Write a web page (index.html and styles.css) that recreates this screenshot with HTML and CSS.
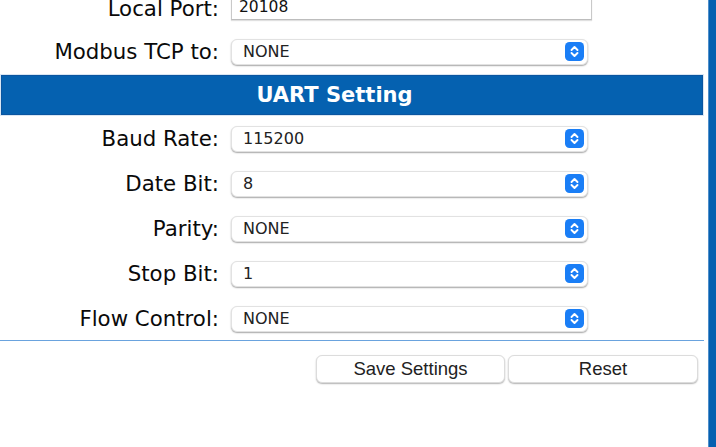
FILE: index.html
```html
<!DOCTYPE html>
<html>
<head>
<meta charset="utf-8">
<link rel="stylesheet" href="styles.css">
</head>
<body>
<div class="page">
  <div class="content">
    <div class="row first">
      <div class="label">Local Port:</div>
      <div class="input">20108</div>
    </div>
    <div class="row">
      <div class="label">Modbus TCP to:</div>
      <div class="select"><span>NONE</span><svg class="ico" viewBox="0 0 19 19"><rect width="19" height="19" rx="4.5" fill="#1a7ef6"/><path d="M6.5 8 L9.5 5 L12.5 8 M6.5 11 L9.5 14 L12.5 11" stroke="#fff" stroke-width="1.9" fill="none" stroke-linecap="round" stroke-linejoin="round"/></svg></div>
    </div>
    <div class="banner"><span>UART Setting</span></div>
    <div class="row">
      <div class="label">Baud Rate:</div>
      <div class="select"><span>115200</span><svg class="ico" viewBox="0 0 19 19"><rect width="19" height="19" rx="4.5" fill="#1a7ef6"/><path d="M6.5 8 L9.5 5 L12.5 8 M6.5 11 L9.5 14 L12.5 11" stroke="#fff" stroke-width="1.9" fill="none" stroke-linecap="round" stroke-linejoin="round"/></svg></div>
    </div>
    <div class="row">
      <div class="label">Date Bit:</div>
      <div class="select"><span>8</span><svg class="ico" viewBox="0 0 19 19"><rect width="19" height="19" rx="4.5" fill="#1a7ef6"/><path d="M6.5 8 L9.5 5 L12.5 8 M6.5 11 L9.5 14 L12.5 11" stroke="#fff" stroke-width="1.9" fill="none" stroke-linecap="round" stroke-linejoin="round"/></svg></div>
    </div>
    <div class="row">
      <div class="label">Parity:</div>
      <div class="select"><span>NONE</span><svg class="ico" viewBox="0 0 19 19"><rect width="19" height="19" rx="4.5" fill="#1a7ef6"/><path d="M6.5 8 L9.5 5 L12.5 8 M6.5 11 L9.5 14 L12.5 11" stroke="#fff" stroke-width="1.9" fill="none" stroke-linecap="round" stroke-linejoin="round"/></svg></div>
    </div>
    <div class="row">
      <div class="label">Stop Bit:</div>
      <div class="select"><span>1</span><svg class="ico" viewBox="0 0 19 19"><rect width="19" height="19" rx="4.5" fill="#1a7ef6"/><path d="M6.5 8 L9.5 5 L12.5 8 M6.5 11 L9.5 14 L12.5 11" stroke="#fff" stroke-width="1.9" fill="none" stroke-linecap="round" stroke-linejoin="round"/></svg></div>
    </div>
    <div class="row">
      <div class="label">Flow Control:</div>
      <div class="select"><span>NONE</span><svg class="ico" viewBox="0 0 19 19"><rect width="19" height="19" rx="4.5" fill="#1a7ef6"/><path d="M6.5 8 L9.5 5 L12.5 8 M6.5 11 L9.5 14 L12.5 11" stroke="#fff" stroke-width="1.9" fill="none" stroke-linecap="round" stroke-linejoin="round"/></svg></div>
    </div>
    <div class="rule"></div>
    <div class="actions">
      <div class="btn save">Save Settings</div>
      <div class="btn reset">Reset</div>
    </div>
  </div>
  <div class="sidebar"></div>
</div>
</body>
</html>
```
FILE: styles.css
```css
html, body {
  margin: 0;
  padding: 0;
  background: #fff;
  overflow: hidden;
}
.page {
  display: flex;
  width: 716px;
  height: 447px;
  gap: 4px;
}
.content {
  width: 705px;
  display: flex;
  flex-direction: column;
  margin-top: -16px;
}
.sidebar {
  width: 7px;
  background: #0560b0;
  border-left: 1px solid #4f8fcb;
}
.row {
  height: 45px;
  display: grid;
  grid-template-columns: 219px 357px;
  column-gap: 12px;
  align-items: center;
}
.row.first {
  align-items: end;
}
.row.first .label {
  margin-bottom: 8px;
}
.row.first .input {
  margin-bottom: 9px;
}
.label {
  font-family: "DejaVu Sans", Verdana, sans-serif;
  font-size: 21.3px;
  line-height: 25px;
  color: #0a0a0a;
  text-align: right;
}
.input {
  box-sizing: border-box;
  width: 361px;
  height: 27px;
  border: 1px solid #c9c9c9;
  border-bottom-color: #bdbdbd;
  box-shadow: 0 1px 1px rgba(0,0,0,0.12);
  font-family: "DejaVu Sans", Verdana, sans-serif;
  font-size: 15.5px;
  color: #111;
  display: flex;
  align-items: center;
  padding-left: 7px;
}
.select {
  box-sizing: border-box;
  height: 26px;
  border: 1px solid #e2e2e2;
  border-radius: 6px;
  box-shadow: 0 1px 1.5px rgba(0,0,0,0.35);
  display: flex;
  align-items: center;
  justify-content: space-between;
  padding: 0 3px 0 11px;
  font-family: "DejaVu Sans", Verdana, sans-serif;
  font-size: 16px;
  color: #222;
  background: #fff;
}
.ico {
  width: 19px;
  height: 19px;
  display: block;
}
.banner {
  box-sizing: border-box;
  height: 42px;
  background: #0561b0;
  border: 1px solid #d9e6f3;
  box-shadow: inset 0 0 0 1px #0a55a0;
  display: flex;
  align-items: center;
  justify-content: center;
  padding-right: 35px;
}
.banner span {
  font-family: "DejaVu Sans", Verdana, sans-serif;
  font-weight: bold;
  font-size: 21px;
  color: #fff;
}
.rule {
  height: 1px;
  margin-top: -1px;
  background: #6aa3de;
}
.actions {
  display: flex;
  justify-content: flex-end;
  gap: 3px;
  padding-right: 6px;
  margin-top: 14px;
}
.btn {
  box-sizing: border-box;
  height: 28px;
  border: 1px solid #dcdcdc;
  border-radius: 6px;
  box-shadow: 0 1px 1.5px rgba(0,0,0,0.3);
  font-family: "Liberation Sans", Arial, sans-serif;
  font-size: 18.5px;
  color: #222;
  display: flex;
  align-items: center;
  justify-content: center;
  background: #fff;
}
.save { width: 189px; }
.reset { width: 190px; }
```
